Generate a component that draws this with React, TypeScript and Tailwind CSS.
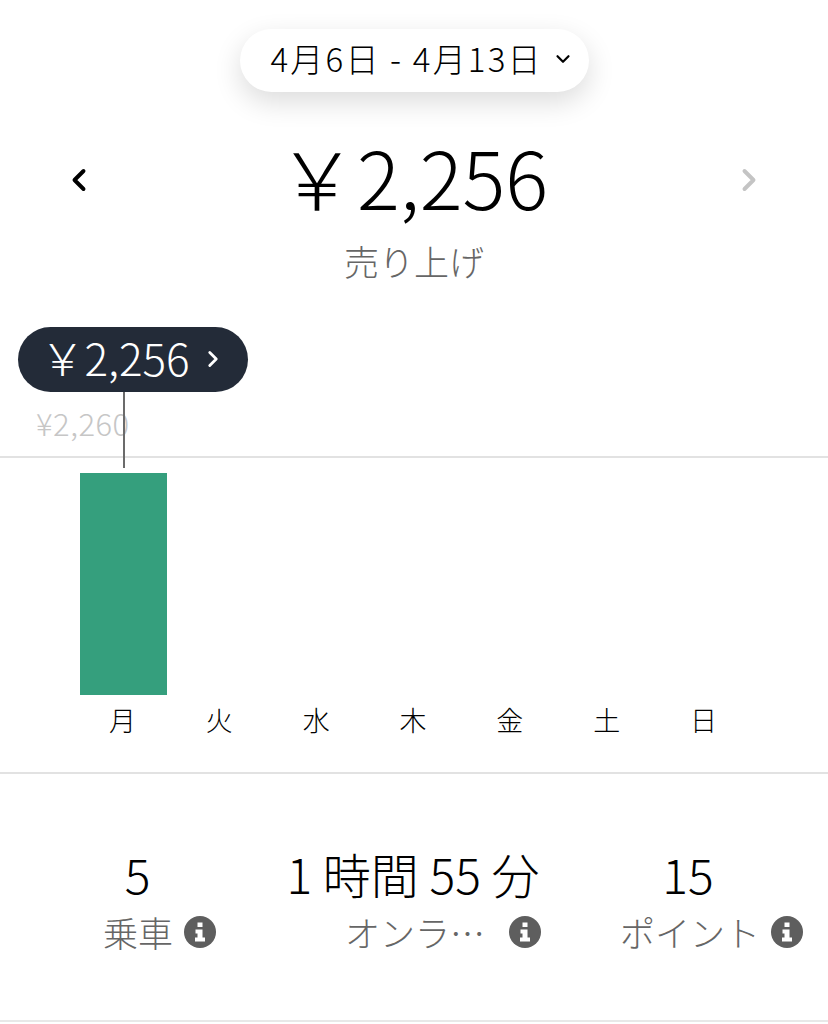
import { ChevronDown, ChevronLeft, ChevronRight } from 'lucide-react';

const days = ['月', '火', '水', '木', '金', '土', '日'];

function InfoIcon() {
  return (
    <svg viewBox="0 0 32 32" className="w-8 h-8 shrink-0">
      <circle cx="16" cy="16" r="16" fill="#5e5e5e" />
      <rect x="13.5" y="6.5" width="5" height="4.5" fill="#fff" />
      <path d="M11.5 13.5h7v8h2.5v4H11v-4h2.5v-4h-2z" fill="#fff" />
    </svg>
  );
}

function Stat({ value, label, labelWidth, className, labelClass }: { value: string; label: string; labelWidth: string; className: string; labelClass?: string }) {
  return (
    <div className={`flex flex-col ${className}`}>
      <div className={`text-[48px] leading-[60px] text-black whitespace-nowrap ${labelWidth} text-center`}>{value}</div>
      <div className="flex items-center justify-between h-[52px] mt-[3px]">
        <span className={`text-[35px] leading-[52px] text-[#666666] whitespace-nowrap ${labelClass ?? ''}`}>{label}</span>
        <InfoIcon />
      </div>
    </div>
  );
}

export default function App() {
  return (
    <div className="w-[828px] h-[1024px] bg-white overflow-hidden font-['Noto_Sans_CJK_JP','Noto_Sans',sans-serif] font-light">
      <div className="flex justify-center pt-[29px]">
        <div className="w-[349px] h-[63px] rounded-full bg-white shadow-[0_10px_28px_rgba(0,0,0,0.14)] flex items-center pl-[31px] gap-[9px]">
          <span className="text-[33px] leading-[40px] text-black whitespace-nowrap tracking-[2.2px] mt-[-6px]">4月6日 - 4月13日</span>
          <ChevronDown className="w-[22px] h-[22px] text-black mt-[-4px]" strokeWidth={2.4} />
        </div>
      </div>

      <div className="flex items-center justify-between px-[61px] h-[100px] mt-[38px]">
        <ChevronLeft className="w-9 h-9 text-black" strokeWidth={2.6} />
        <div className="text-[80px] leading-[100px] text-black whitespace-nowrap mt-[-10px] ml-[-3px]">
          {'\uFFE5'}2,256
        </div>
        <ChevronRight className="w-9 h-9 text-[#c4c4c4]" strokeWidth={2.6} />
      </div>

      <div className="text-center text-[35px] leading-[48px] text-[#666666] mt-[7px]">売り上げ</div>

      <div className="relative mt-[171px] h-[318px] border-t-2 border-b-2 border-[#e2e2e2]">
        <div className="absolute left-[36px] top-[-53px] text-[31px] leading-[36px] text-[#c6c6c6] tracking-[0.5px]">¥2,260</div>
        <div className="absolute left-[123px] top-[-66px] w-[1.5px] h-[76px] bg-[#6b6b6b]" />
        <div className="absolute left-[18px] top-[-131px] w-[230px] h-[65px] rounded-full bg-[#232b38] text-white flex items-center justify-center gap-[10px]">
          <span className="text-[44px] leading-[65px] whitespace-nowrap mt-[-4px]">{'\uFFE5'}2,256</span>
          <ChevronRight className="w-[26px] h-[26px] mt-[-2px]" strokeWidth={2.6} />
        </div>

        <div className="flex h-full flex-col pt-[15px] pl-[74px] pr-[76px]">
          <div className="h-[222px] flex items-end pl-[6px]">
            <div className="w-[87px] h-[222px] bg-[#359f7d]" />
          </div>
          <div className="grid grid-cols-7 mt-[7px]">
            {days.map((day) => (
              <span key={day} className="text-[27px] leading-[36px] text-black text-center">
                {day}
              </span>
            ))}
          </div>
        </div>
      </div>

      <div className="flex h-[248px] pt-[69px] border-b-2 border-[#e8e8e8]">
        <Stat value="5" label="乗車" labelWidth="w-[69px]" className="w-[113px] ml-[103px]" />
        <Stat value="1 時間 55 分" label="オンラ…" labelWidth="w-[256px]" labelClass="ml-[60px]" className="w-[256px] ml-[69px]" />
        <Stat value="15" label="ポイント" labelWidth="w-[136px]" className="w-[183px] ml-[79px]" />
      </div>
    </div>
  );
}
